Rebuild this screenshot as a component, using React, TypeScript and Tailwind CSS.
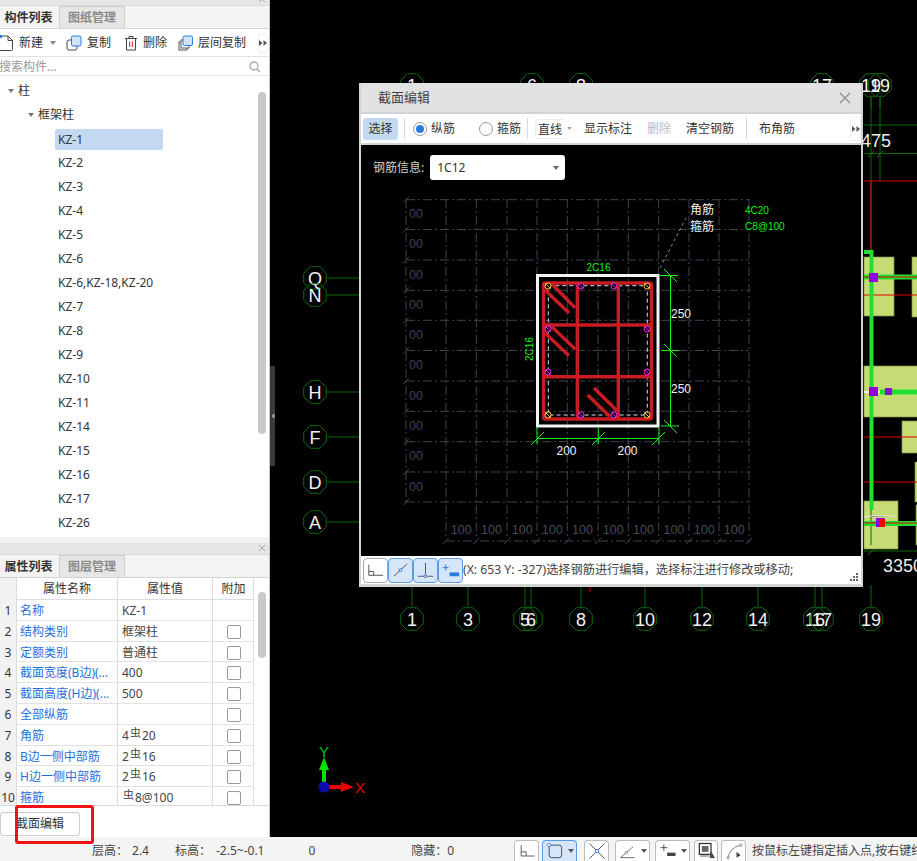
import React from "react";

const SANS = "font-['Noto_Sans','Noto_Sans_CJK_SC',sans-serif]";
const kz = ["KZ-2","KZ-3","KZ-4","KZ-5","KZ-6","KZ-6,KZ-18,KZ-20","KZ-7","KZ-8","KZ-9","KZ-10","KZ-11","KZ-14","KZ-15","KZ-16","KZ-17","KZ-26"];

const S = () => <span className="relative -top-[3px] text-[11px] mx-[1px]">虫</span>;
const rows: [string, React.ReactNode, boolean][] = [
  ["名称", "KZ-1", false],
  ["结构类别", "框架柱", true],
  ["定额类别", "普通柱", true],
  ["截面宽度(B边)(...", "400", true],
  ["截面高度(H边)(...", "500", true],
  ["全部纵筋", "", true],
  ["角筋", <>4<S />20</>, true],
  ["B边一侧中部筋", <>2<S />16</>, true],
  ["H边一侧中部筋", <>2<S />16</>, true],
  ["箍筋", <><S />8@100</>, true],
];

function Tabs({ a, b }: { a: string; b: string }) {
  return (
    <div className="flex h-[23px] border-b border-[#d4d4d4] bg-[#f3f3f3] text-[12px] font-bold shrink-0">
      <div className="w-[59px] flex items-center justify-center text-[#333] pt-[1px] pr-[2px]">{a}</div>
      <div className="w-[66px] flex items-center justify-center text-[#8a8a8a] bg-[#e6e6e6] border border-b-0 border-[#cfcfcf] pt-[1px]">{b}</div>
    </div>
  );
}

function Strip({ h }: { h: string }) {
  return (
    <div className={`${h} bg-[#e6e6e6] border-b border-[#d8d8d8] shrink-0 relative overflow-hidden`}>
      <svg className="absolute right-[2px] bottom-[1px]" width="10" height="10" viewBox="0 0 10 10"><path d="M2 2 L8 8 M8 2 L2 8" stroke="#aaa" /></svg>
    </div>
  );
}

function LeftPanel() {
  return (
    <div className={`w-[270px] shrink-0 flex flex-col bg-[#f0f0f0] border-r border-[#c8c8c8] relative overflow-hidden`}>
      <Strip h="h-[6px]" />
      <Tabs a="构件列表" b="图纸管理" />
      <div className="h-[28px] flex items-center bg-white border-b border-[#e2e2e2] text-[12px] text-[#333] shrink-0 relative pt-[1px]">
        <svg className="ml-[-1px]" width="15" height="18" viewBox="0 0 15 18" fill="none"><path d="M1 2 H9 L13.5 6.5 V15.5 Q13.5 16.5 12.5 16.5 H1" stroke="#444" /><path d="M9 2 V6.5 H13.5" stroke="#444" /><rect x="0" y="1" width="3" height="3" fill="#2a7be0" /></svg>
        <span className="ml-[5px]">新建</span>
        <svg className="ml-[7px]" width="6" height="4" viewBox="0 0 6 4"><path d="M0 0 H6 L3 4 Z" fill="#888" /></svg>
        <svg className="ml-[10px]" width="16" height="16" viewBox="0 0 16 16" fill="none"><rect x="1" y="5" width="10" height="10" rx="2" stroke="#444" /><rect x="5.5" y="1" width="9.5" height="10" rx="1.5" fill="#cfe2f8" stroke="#2a7be0" /></svg>
        <span className="ml-[5px]">复制</span>
        <svg className="ml-[13px]" width="14" height="16" viewBox="0 0 14 16" fill="none"><path d="M1 3.5 H13 M5 3.5 V1.5 H9 V3.5 M2.5 3.5 V15 H11.5 V3.5" stroke="#444" /><path d="M5.7 6.5 V12 M8.3 6.5 V12" stroke="#e01b1b" /></svg>
        <span className="ml-[5px]">删除</span>
        <svg className="ml-[11px]" width="15" height="16" viewBox="0 0 15 16" fill="none"><rect x="1" y="7" width="8" height="8" stroke="#555" /><rect x="3" y="5" width="8" height="8" fill="#fff" stroke="#555" /><rect x="5" y="1" width="9.5" height="9.5" rx="1.5" fill="#cfe2f8" stroke="#2a7be0" /></svg>
        <span className="ml-[5px]">层间复制</span>
        <div className="ml-[12px] w-[10px] h-[19px] rounded-[3px] border border-[#eee] flex items-center justify-center">
          <svg width="8" height="6" viewBox="0 0 8 6"><path d="M0 0 L3.5 3 L0 6 Z M4.5 0 L8 3 L4.5 6 Z" fill="#555" /></svg>
        </div>
      </div>
      <div className="h-[19px] flex items-center justify-between bg-white border-b border-[#e2e2e2] text-[12px] text-[#9a9a9a] shrink-0 pr-[8px] pt-[1px]">
        <span className="-ml-[1px]">搜索构件...</span>
        <svg width="12" height="12" viewBox="0 0 12 12" fill="none"><circle cx="5" cy="5" r="4" stroke="#aaa" strokeWidth="1.3" /><path d="M8 8 L11 11" stroke="#aaa" strokeWidth="1.5" /></svg>
      </div>
      <div className="h-[461px] bg-white relative shrink-0 text-[12px] text-[#333] pt-[3px]">
        <div className="absolute right-[3px] top-[16px] w-[8px] h-[342px] rounded-full bg-[#c9c9c9]" />
        <div className="h-[24px] flex items-center pl-[8px] gap-[4px]"><svg width="6" height="4" viewBox="0 0 6 4"><path d="M0 0 H6 L3 4 Z" fill="#777" /></svg><span>柱</span></div>
        <div className="h-[24px] flex items-center pl-[28px] gap-[4px]"><svg width="6" height="4" viewBox="0 0 6 4"><path d="M0 0 H6 L3 4 Z" fill="#777" /></svg><span>框架柱</span></div>
        <div className="h-[24px] flex items-center pl-[55px]"><span className="w-[108px] h-[21px] leading-[21px] pl-[3px] rounded-[2px] bg-[#c3d9f1]">KZ-1</span></div>
        {kz.map((k, i) => (
          <div key={i} className="h-[24px] flex items-center pl-[58px]">{k}</div>
        ))}
      </div>
      <div className="h-[6px] shrink-0" />
      <Strip h="h-[12px]" />
      <Tabs a="属性列表" b="图层管理" />
      <div className="h-[228px] bg-white relative overflow-hidden shrink-0 border-b border-[#d8d8d8] text-[12px]">
        <div className="absolute right-[3px] top-[14px] w-[8px] h-[66px] rounded-full bg-[#c9c9c9]" />
        <div className="grid grid-cols-[17px_101px_95px_41px] h-[22px] text-[#333] text-center leading-[22px] border-b border-[#dcdcdc] w-[254px] border-r">
          <div className="bg-[#f2f2f2] border-r border-[#dcdcdc]" />
          <div className="border-r border-[#dcdcdc]">属性名称</div>
          <div className="border-r border-[#dcdcdc]">属性值</div>
          <div>附加</div>
        </div>
        {rows.map(([n, v, c], i) => (
          <div key={i} className="grid grid-cols-[17px_101px_95px_41px] h-[20.8px] leading-[22px] border-b border-[#e2e2e2] w-[254px] border-r">
            <div className="bg-[#f2f2f2] border-r border-[#dcdcdc] text-[#333] text-center">{i + 1}</div>
            <div className="border-r border-[#dcdcdc] text-[#1f6fe0] pl-[3px] whitespace-nowrap overflow-hidden">{n}</div>
            <div className="border-r border-[#dcdcdc] text-[#444] pl-[4px]">{v}</div>
            <div className="flex items-center justify-center">
              {c && <span className="w-[14px] h-[14px] rounded-[2px] border border-[#999] bg-white" />}
            </div>
          </div>
        ))}
      </div>
      <div className="flex-1 bg-white pt-[4px]">
        <button className="w-[80px] h-[24px] bg-white border border-[#ccc] rounded-[3px] text-[12px] text-[#333] text-center">截面编辑</button>
      </div>
    </div>
  );
}

function Bubble({ x, y, t }: { x: number; y: number; t: string }) {
  const r = 12.2;
  const pts = Array.from({ length: 8 }, (_, i) => {
    const a = (Math.PI / 4) * i + Math.PI / 8;
    return `${x + r * Math.cos(a)},${y + r * Math.sin(a)}`;
  }).join(" ");
  return (
    <g>
      <polygon points={pts} fill="none" stroke="#0b6b0b" strokeWidth="1" />
      <text x={x} y={y + 6.5} textAnchor="middle" fill="#f2f2f2" fontSize="18" fontFamily="Liberation Sans">{t}</text>
    </g>
  );
}

function Canvas() {
  const left: [number, string][] = [[278, "Q"], [295, "N"], [392, "H"], [437, "F"], [482, "D"], [522, "A"]];
  const top: [number, string][] = [[412, "1"], [532, "6"], [581, "8"], [822, "17"], [871, "19"], [880, "19"]];
  const bot: [number, string][] = [[412, "1"], [468, "3"], [525, "5"], [531, "6"], [581, "8"], [645, "10"], [702, "12"], [758, "14"], [815, "16"], [822, "17"], [871, "19"]];
  const blocks = [[864, 257, 30, 59], [912, 257, 8, 60], [864, 366, 56, 51], [902, 421, 18, 32], [915, 462, 5, 40], [864, 501, 34, 48], [916, 505, 4, 40]];
  return (
    <svg className="absolute inset-0" width="647" height="837" viewBox="270 0 647 837">
      <rect x="270" y="0" width="647" height="837" fill="#000" />
      <rect x="270" y="366" width="5" height="100" fill="#3a3a3a" />
      <path d="M271.5 416 l3 -3 v6 z" fill="#aaa" />
      {blocks.map((b, i) => (
        <rect key={i} x={b[0]} y={b[1]} width={b[2]} height={b[3]} fill="#c5dc75" stroke="#7f8f50" strokeWidth="0.7" />
      ))}
      <g stroke="#0b6b0b" fill="none">
        {left.map(([y]) => <path key={y} d={`M327 ${y} H360`} />)}
        {bot.map(([x]) => <path key={x} d={`M${x} 585 V607`} />)}
        {top.map(([x]) => <path key={x} d={`M${x} 97 V108`} />)}
        <path d="M864 125 H917 M864 153.5 H917 M880 97 V181 M871 97 V250 M871 507 V545 M864 551 H917" />
        <path d="M868 157 l6 -6 M877 157 l6 -6 M868 555 l6 -6" />
      </g>
      <path d="M864 181 H917 M864 295 H917 M864 437 H917 M864 482 H917 M864 522 H917" stroke="#e00000" />
      <path d="M871 181 V250" stroke="#e00000" />
      <path d="M864 252 H871.5 V510" stroke="#22dd33" strokeWidth="4" fill="none" />
      <path d="M864 277 H917 M880 392 H917 M864 523.5 H917" stroke="#22dd33" strokeWidth="5" />
      <path d="M864 277 H917 M864 523 H917" stroke="#e00000" />
      <path d="M864 392 H880" stroke="#eee" strokeWidth="2" />
      <path d="M864 517 L872 516 H895" stroke="#eee" />
      <rect x="869" y="273" width="9" height="9" fill="#9000e0" />
      <rect x="869" y="387" width="9" height="9" fill="#9000e0" />
      <rect x="885" y="388" width="7" height="7" fill="#9000e0" />
      <rect x="876" y="518" width="9" height="9" fill="#9000e0" />
      <rect x="880" y="519" width="5" height="8" fill="#ff0000" />
      {left.map(([y, t]) => <Bubble key={t} x={315} y={y} t={t} />)}
      {top.map(([x, t]) => <Bubble key={x} x={x} y={85} t={t} />)}
      {bot.map(([x, t]) => <Bubble key={x} x={x} y={619} t={t} />)}
      <text x="861" y="146.5" fill="#eee" fontSize="18" fontFamily="Liberation Sans">475</text>
      <text x="883" y="572" fill="#eee" fontSize="18" fontFamily="Liberation Sans">3350</text>
      <path d="M590 587 V592" stroke="#c00" />
      <g>
        <path d="M324 787 V770" stroke="#00e000" strokeWidth="4" />
        <path d="M324 757 L329 770 H319 Z" fill="#00e000" />
        <text x="324" y="757" textAnchor="middle" fill="#00c800" fontSize="15" fontFamily="Liberation Sans">Y</text>
        <path d="M324 787 H342" stroke="#f00000" strokeWidth="4" />
        <path d="M354 787 L341 782 V792 Z" fill="#f00000" />
        <text x="360" y="793" textAnchor="middle" fill="#f00000" fontSize="15" fontFamily="Liberation Sans">X</text>
        <circle cx="324" cy="787" r="5.5" fill="#0a0ab0" />
      </g>
    </svg>
  );
}

function Section() {
  const ys = [199.7, 229.5, 260, 290.3, 320.3, 350.5, 381, 411.3, 441.7, 472, 502];
  const xs = [446, 476.3, 507, 537, 567.3, 598, 628.3, 658.7, 689, 719, 749];
  const dd = "9 3 2 3";
  const stroke = "#3d4350";
  const red = "#c81b22";
  const dim = "#18f018";
  const white = "#f4f4f4";
  const corner = [[548, 286], [647, 286], [548, 415], [647, 415]];
  const mid = [[581, 286], [614, 286], [581, 415], [614, 415], [548, 329], [647, 329], [548, 372], [647, 372]];
  return (
    <svg className="block" width="500" height="366" viewBox="361 190 500 366" fontFamily="Liberation Sans">
      <g stroke={stroke} fill="none" strokeDasharray={dd}>
        {ys.map((y) => <path key={y} d={`M406 ${y} H749`} />)}
        {xs.map((x) => <path key={x} d={`M${x} 199 V538`} />)}
        <path d="M406 199 V502 M446 541 H749" />
      </g>
      <g stroke={stroke} fill="none">
        {ys.map((y) => <path key={y} d={`M403 ${y + 3} l6 -6`} />)}
        {xs.map((x) => <path key={x} d={`M${x - 3} 544 l6 -6`} />)}
      </g>
      <g fill="#3d4350" fontSize="12.5">
        {ys.slice(0, -1).map((y) => (
          <text key={y} x="409" y={y + 18.5}>00</text>
        ))}
        {xs.slice(0, -1).map((x) => (
          <text key={x} x={x + 15.2} y="534" textAnchor="middle" fill="#474c57">100</text>
        ))}
      </g>
      <rect x="537.5" y="275.5" width="120.5" height="150.5" fill="none" stroke={white} strokeWidth="3" />
      <rect x="548.3" y="285.7" width="99" height="129.3" fill="none" stroke="#cfe2ff" strokeDasharray="4 3" />
      <g stroke={red} strokeWidth="3.4" fill="none">
        <rect x="543.5" y="283" width="108" height="136" rx="2" />
        <path d="M577.3 283 V419 M618.3 283 V419 M542 325 H652 M542 376.7 H652" />
        <path d="M545 290 L569 313 M551 283 L575 307.7 M545 333 L569 355.7 M548 323 L575.3 349.3 M587.7 395 L610 416.7 M594 388 L617.3 411" />
      </g>
      {corner.map(([x, y]) => (
        <g key={`${x}${y}`}>
          <circle cx={x} cy={y} r="3" fill="#000" stroke="#f0c040" />
          <path d={`M${x - 2.5} ${y - 2.5} l5 5`} stroke="#f0c040" />
        </g>
      ))}
      {mid.map(([x, y]) => (
        <g key={`${x}${y}`}>
          <circle cx={x} cy={y} r="3" fill="#000" stroke="#f020f0" />
          <path d={`M${x - 2} ${y - 2} l4 4`} stroke="#f020f0" />
        </g>
      ))}
      <path d="M660 268 L686 218" stroke="#888" strokeDasharray="3 3" fill="none" />
      <g stroke={dim} fill="none">
        <path d="M537 438.5 H659 M537 427 V444 M598.3 428 V444 M659 428 V444" />
        <path d="M531 445 l13 -13 M592 445 l13 -13 M652 445 l13 -13" />
        <path d="M660 275.5 H678 M670.5 275 V427 M661 350.5 H679 M661 426 H679" />
        <path d="M664 269 l13 13 M664 344 l13 13 M664 420 l13 13" />
      </g>
      <g fill={white} fontSize="12">
        <text x="566.5" y="455" textAnchor="middle">200</text>
        <text x="627.5" y="455" textAnchor="middle">200</text>
        <text x="681" y="317.5" textAnchor="middle">250</text>
        <text x="681" y="392.5" textAnchor="middle">250</text>
      </g>
      <g fontFamily="Noto Sans CJK SC" fontSize="12" fill={white}>
        <text x="690" y="214">角筋</text>
        <text x="690" y="231">箍筋</text>
      </g>
      <g fill={dim} fontSize="10">
        <text x="598.5" y="270.5" textAnchor="middle">2C16</text>
        <text x="745" y="213.5">4C20</text>
        <text x="745" y="229.5">C8@100</text>
        <text x="533" y="349" textAnchor="middle" transform="rotate(-90 533 349)">2C16</text>
      </g>
    </svg>
  );
}

const Dots = () => (
  <svg width="8" height="6" viewBox="0 0 8 6"><path d="M0 0 L3.5 3 L0 6 Z M4.5 0 L8 3 L4.5 6 Z" fill="#555" /></svg>
);

function Dialog() {
  return (
    <div className={`absolute left-[89px] top-[83px] w-[504px] h-[504px] flex flex-col bg-[#dcdcdc] border-x-2 border-b-[3px] border-[#d4d4d4] text-[12px] text-[#333]`}>
      <div className="h-[29px] shrink-0 flex items-center justify-between pl-[17px] pr-[10px] pt-[1px] text-[13px] text-[#444] bg-[#e2e2e2]">
        <span>截面编辑</span>
        <svg width="12" height="12" viewBox="0 0 12 12"><path d="M1 1 L11 11 M11 1 L1 11" stroke="#888" strokeWidth="1.1" /></svg>
      </div>
      <div className="h-[33px] shrink-0 flex items-center bg-white border-y-2 border-[#cfd2d6] pl-[2px]">
        <span className="w-[35px] h-[22px] leading-[22px] text-center rounded-[3px] bg-[#c3d9f1]">选择</span>
        <span className="ml-[6px] w-px h-[21px] bg-[#d8d8d8]" />
        <span className="ml-[8px] w-[14px] h-[14px] rounded-full border border-[#999] flex items-center justify-center">
          <span className="w-[8px] h-[8px] rounded-full bg-[#2a7be0]" />
        </span>
        <span className="ml-[4px]">纵筋</span>
        <span className="ml-[24px] w-[14px] h-[14px] rounded-full border border-[#999]" />
        <span className="ml-[4px]">箍筋</span>
        <span className="ml-[6px] w-px h-[21px] bg-[#d8d8d8]" />
        <span className="ml-[7px] w-[29px] h-[20px] leading-[20px] pl-[2px] border-l border-y border-[#eee] rounded-l-[3px]">直线</span>
        <svg className="ml-[3px]" width="5" height="3" viewBox="0 0 6 4"><path d="M0 0 H6 L3 4 Z" fill="#999" /></svg>
        <span className="ml-[12px]">显示标注</span>
        <span className="ml-[15px] text-[#bbb]">删除</span>
        <span className="ml-[15px]">清空钢筋</span>
        <span className="ml-[12px] w-px h-[21px] bg-[#d8d8d8]" />
        <span className="ml-[12px]">布角筋</span>
        <div className="ml-[55px] w-[11px] h-[24px] rounded-[3px] border border-[#eee] flex items-center justify-center"><Dots /></div>
      </div>
      <div className="flex-1 min-h-0 bg-black flex flex-col">
        <div className="h-[45px] shrink-0 flex items-center pl-[12px] text-[#d0d0d0]">
          <span>钢筋信息:</span>
          <div className="ml-[6px] w-[135px] h-[25px] bg-white rounded-[3px] text-[#333] flex items-center justify-between pl-[7px] pr-[6px]">
            <span>1C12</span>
            <svg width="6" height="4" viewBox="0 0 6 4"><path d="M0 0 H6 L3 4 Z" fill="#666" /></svg>
          </div>
        </div>
        <Section />
      </div>
      <div className="h-[28px] shrink-0 flex items-center bg-white pl-[2px] relative whitespace-nowrap">
        <Btn on={false}><path d="M5 6 V17 H20 M5 13 H10 V17" stroke="#555" fill="none" /></Btn>
        <Btn on><path d="M5 18 L19 5" stroke="#555" /><circle cx="12" cy="11.5" r="1.5" fill="#cfe2f8" stroke="#2a7be0" /></Btn>
        <Btn on><path d="M12 4 V17 M4 18 H20" stroke="#555" /><circle cx="12" cy="18" r="1.5" fill="#cfe2f8" stroke="#2a7be0" /></Btn>
        <Btn on><path d="M4 9 H10 M7 6 V12" stroke="#2a7be0" /><rect x="11" y="14" width="10" height="4" fill="#2a7be0" /></Btn>
        <span className="text-[12.2px] text-[#444]">(X: 653 Y: -327)选择钢筋进行编辑，选择标注进行修改或移动;</span>
        <svg className="absolute right-[2px] bottom-[3px]" width="9" height="8" viewBox="0 0 9 8"><path d="M6 0 h2 v2 h-2 z M3 3 h2 v2 h-2 z M6 3 h2 v2 h-2 z M0 6 h2 v2 h-2 z M3 6 h2 v2 h-2 z M6 6 h2 v2 h-2 z" fill="#666" /></svg>
      </div>
    </div>
  );
}

function Btn({ on, children }: { on: boolean; children: React.ReactNode }) {
  return (
    <span className={on ? "w-[25px] h-[25px] rounded-[4px] border border-[#5a9be8] bg-[#d6e6fa] flex items-center justify-center" : "w-[25px] h-[25px] rounded-[4px] border border-[#aaa] bg-white flex items-center justify-center"}>
      <svg width="23" height="23" viewBox="0 0 24 24">{children}</svg>
    </span>
  );
}

function SBtn({ cls, on, caret, children }: { cls: string; on?: boolean; caret?: boolean; children: React.ReactNode }) {
  return (
    <span className={`${cls} h-[21px] shrink-0 rounded-t-[4px] border border-b-0 ${on ? "border-[#5a9be8] bg-[#d6e6fa]" : "border-[#bbb] bg-white"} flex items-center justify-center gap-[3px]`}>
      <svg width="20" height="20" viewBox="0 0 24 24" fill="none">{children}</svg>
      {caret && <svg width="6" height="4" viewBox="0 0 6 4"><path d="M0 0 H6 L3 4 Z" fill="#555" /></svg>}
    </span>
  );
}

function StatusBar() {
  return (
    <div className="h-[24px] shrink-0 bg-[#f4f4f4] flex items-end text-[12px] text-[#444] whitespace-nowrap overflow-hidden relative">
      <div className="h-[24px] pt-[3px] flex items-center w-[514px] shrink-0">
        <span className="ml-[92px]">层高：</span><span className="ml-[4px]">2.4</span>
        <span className="ml-[26px]">标高：</span><span className="ml-[5px]">-2.5~-0.1</span>
        <span className="ml-[44px]">0</span>
        <span className="ml-[96px]">隐藏：</span><span className="ml-[0px]">0</span>
      </div>
      <div className="flex items-end">
        <SBtn cls="w-[25px]"><path d="M5 5 V18 H21 M5 13 H11 V18" stroke="#444" /></SBtn>
        <SBtn cls="ml-[3px] w-[35px]" on caret><rect x="5" y="5" width="15" height="15" rx="3" stroke="#333" /><circle cx="5" cy="5" r="2" fill="#fff" stroke="#2a7be0" /></SBtn>
        <SBtn cls="ml-[7px] w-[25px]"><path d="M3 3 L21 21 M21 3 L3 21" stroke="#333" /><circle cx="12" cy="12" r="2" fill="#fff" stroke="#2a7be0" /></SBtn>
        <SBtn cls="ml-[6px] w-[35px]" caret><path d="M3 20 H20 M3 20 L18 7" stroke="#555" /><circle cx="10" cy="14" r="1.5" fill="#fff" stroke="#777" /></SBtn>
        <SBtn cls="ml-[5px] w-[35px]" caret><path d="M3 8 H11 M7 4 V12" stroke="#333" /><rect x="11" y="14" width="10" height="4" fill="#444" /></SBtn>
        <SBtn cls="ml-[4px] w-[24px]"><rect x="4" y="3" width="14" height="13" stroke="#333" strokeWidth="1.5" /><rect x="7" y="6" width="8" height="7" fill="#666" /><path d="M5 18 H16 M18 13 L22 20 H17 Z" stroke="#444" fill="#444" /></SBtn>
        <SBtn cls="ml-[3px] w-[25px]"><path d="M5 21 Q6 8 20 5" stroke="#666" /><circle cx="5" cy="20" r="1.5" stroke="#777" fill="#fff" /><circle cx="20" cy="5" r="1.5" stroke="#777" fill="#fff" /><path d="M15 13 L20 17 L15 20 Z" fill="#444" /></SBtn>
        <span className="h-[21px] leading-[21px] ml-[6px] text-[12px]">按鼠标左键指定插入点,按右键终止或ESC取消</span>
      </div>
    </div>
  );
}

export default function App() {
  return (
    <div className={`w-[917px] h-[861px] flex flex-col overflow-hidden relative bg-black ${SANS}`}>
      <div className="h-[837px] flex shrink-0">
        <LeftPanel />
        <div className="flex-1 relative overflow-hidden">
          <Canvas />
          <Dialog />
        </div>
      </div>
      <StatusBar />
      <div className="absolute left-[15px] top-[805px] w-[79px] h-[39px] rounded-[3px] border-[3px] border-[#ee1414]" />
    </div>
  );
}
